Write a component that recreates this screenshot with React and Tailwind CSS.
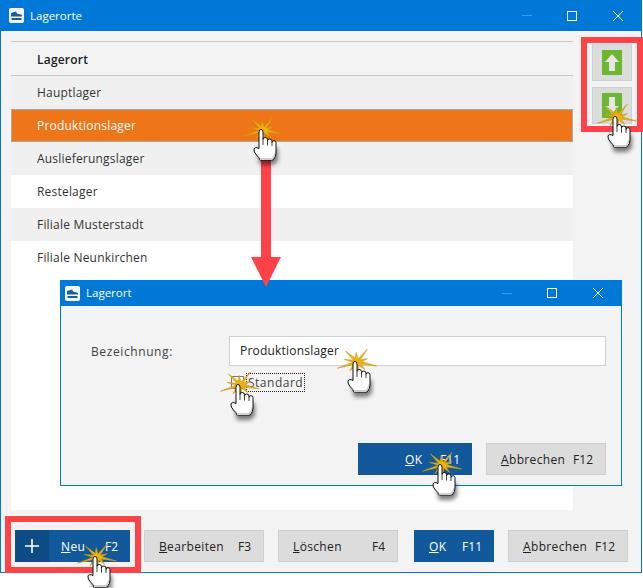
const font = "[font-family:'Open_Sans','Noto_Sans',sans-serif]";

const starPoints = (() => {
  const radii = [20, 5, 12, 4, 18, 4, 13, 5, 21, 4, 13, 4, 18, 5, 12, 4, 19, 4, 11, 5];
  return radii
    .map((r, i) => {
      const a = (i / radii.length) * Math.PI * 2 + 0.25;
      return `${(30 + Math.cos(a) * r).toFixed(1)},${(20 + Math.sin(a) * r * 0.8).toFixed(1)}`;
    })
    .join(' ');
})();

function ClickHand({ className }) {
  return (
    <svg width="60" height="60" viewBox="0 0 60 60" className={`absolute z-30 ${className}`}>
      <defs>
        <filter id="handshadow" x="-30%" y="-30%" width="160%" height="160%">
          <feGaussianBlur stdDeviation="2" />
        </filter>
      </defs>
      <polygon points={starPoints} fill="#edb20f" stroke="#c9960f" strokeWidth="0.6" />
      <path d="M23 38 h22 v13 l-5 4 h-13 z" fill="#000" opacity="0.5" filter="url(#handshadow)" />
      <path
        d="M26 22 q0-2.5 2-2.5 t2 2.5 V29.5 q0-2 2.2-2 t2.3 2 V31 q0-2 2.2-2 t2.3 2 V32.5 q0-1.8 2-1.8 t2 2 V43 q0 4-3 7 H27 q-1-3-3.5-5 q-3-3-2.5-6 q1-2.5 5-.5 z"
        fill="#fff"
        stroke="#111"
        strokeWidth="1"
      />
      <path d="M30 29.5 V35 M34.5 31 V35.5 M39 32.5 V36" stroke="#111" strokeWidth="0.8" fill="none" />
      <path d="M27 48 H39 q2-3 3-7 V45 q-1 3-3 5 H27 z" fill="#cfcfcf" />
    </svg>
  );
}

function AppIcon() {
  return (
    <svg width="15" height="15" viewBox="0 0 15 15" className="shrink-0">
      <rect width="15" height="15" rx="2" fill="#f4f6f8" />
      <path d="M2 5 L7 3.5 L8 5.5 L13 7 V8.5 H2 z" fill="#1a5d9c" />
      <rect x="2.5" y="10" width="10" height="2" fill="#1a5d9c" />
    </svg>
  );
}

function TitleBar({ title, height, iconLeft }) {
  return (
    <div className={`flex items-center bg-[#0078d7] text-white shrink-0 ${height}`}>
      <div className={iconLeft}>
        <AppIcon />
      </div>
      <span className="ml-[6px] text-[11.5px] tracking-normal">{title}</span>
      <div className="ml-auto flex items-center">
        <div className="mr-[35px] h-px w-[10px] bg-[#3f9be3]" />
        <div className="h-[10px] w-[10px] border border-white" />
        <svg width="10" height="10" viewBox="0 0 10 10" className="ml-[36px] mr-[18px]">
          <path d="M0 0 L10 10 M10 0 L0 10" stroke="#fff" strokeWidth="1" />
        </svg>
      </div>
    </div>
  );
}

function Btn({ label, rest, keyName, width, primary, children }) {
  return (
    <button
      className={`flex h-[32px] items-center pr-[12px] text-[12px] tracking-[0.35px] ${width} ${
        primary ? 'bg-[#12599b] text-white' : 'border border-[#cfcfcf] bg-[#dcdcdc] text-[#222]'
      }`}
    >
      {children}
      <span className={`pt-[2px] ${children ? 'ml-[12px]' : ''}`}>
        <u>{label}</u>
        {rest}
      </span>
      <span className="ml-auto pt-[2px] tracking-normal">{keyName}</span>
    </button>
  );
}

function ArrowButton({ down }) {
  return (
    <button className="flex h-[37px] w-[40px] items-start justify-center border border-[#cfcfcf] bg-[#dcdcdc] pt-[5px]">
      <svg width="20" height="25" viewBox="0 0 20 25">
        <rect width="20" height="25" fill="#6cb72f" />
        <path
          d={down ? 'M7 4 H13 V13 H17 L10 21 L3 13 H7 z' : 'M10 4 L17 12 H13 V21 H7 V12 H3 z'}
          fill="#e6e6e6"
        />
      </svg>
    </button>
  );
}

const rows = [
  { name: 'Hauptlager', bg: 'bg-[#f0f0f0] pl-[26px]' },
  { name: 'Produktionslager', bg: 'bg-[#ee7518] text-white border border-[#a9a9a9] pl-[25px]' },
  { name: 'Auslieferungslager', bg: 'bg-[#f0f0f0] pl-[26px]' },
  { name: 'Restelager', bg: 'bg-white pl-[26px]' },
  { name: 'Filiale Musterstadt', bg: 'bg-[#f0f0f0] pl-[26px]' },
  { name: 'Filiale Neunkirchen', bg: 'bg-white pl-[26px]' },
];

export default function App() {
  return (
    <div className={`relative h-[588px] w-[643px] overflow-hidden bg-white text-[12px] tracking-[0.2px] ${font}`}>
      <div className="flex h-[573px] w-[642px] flex-col border border-t-0 border-[#0078d7] bg-[#f3f3f3]">
        <TitleBar title="Lagerorte" height="h-[31px]" iconLeft="ml-[8px]" />

        <div className="flex flex-1 pl-[10px] pt-[10px]">
          <div className="flex w-[562px] flex-col">
            <div className="flex h-[35px] items-center border-y border-[#c8c8c8] pl-[26px] pt-[2px] font-semibold text-[#222]">
              Lagerort
            </div>
            <div className="flex-1 bg-white">
              {rows.map((row) => (
                <div key={row.name} className={`flex h-[33px] items-center text-[#333] ${row.bg}`}>
                  {row.name}
                </div>
              ))}
            </div>
          </div>
          <div className="ml-[19px] flex flex-col gap-[6px] pt-[3px]">
            <ArrowButton />
            <ArrowButton down />
          </div>
        </div>

        <div className="flex items-center pb-[10px] pl-[14px] pt-[20px]">
          <Btn label="N" rest="eu" keyName="F2" width="w-[115px]" primary>
            <span className="flex h-[32px] w-[34px] items-center justify-center bg-[#0e4c86]">
              <svg width="14" height="14" viewBox="0 0 14 14">
                <path d="M7 0 V14 M0 7 H14" stroke="#fff" strokeWidth="1.6" />
              </svg>
            </span>
          </Btn>
          <div className="ml-[14px]">
            <Btn label="B" rest="earbeiten" keyName="F3" width="w-[120px] pl-[14px]" />
          </div>
          <div className="ml-[14px]">
            <Btn label="L" rest="öschen" keyName="F4" width="w-[120px] pl-[14px]" />
          </div>
          <div className="ml-[16px]">
            <Btn label="O" rest="K" keyName="F11" width="w-[80px] pl-[15px]" primary />
          </div>
          <div className="ml-[14px]">
            <Btn label="A" rest="bbrechen" keyName="F12" width="w-[120px] pl-[14px]" />
          </div>
        </div>
      </div>

      {/* Detail dialog on top of the list */}
      <div className="absolute left-[60px] top-[280px] z-10 flex h-[206px] w-[562px] flex-col border border-t-0 border-[#0078d7] bg-[#f3f3f3]">
        <TitleBar title="Lagerort" height="h-[26px]" iconLeft="ml-[4px]" />
        <div className="flex items-center pl-[30px] pt-[30px]">
          <label className="w-[138px] pt-px tracking-[0.6px] text-[#444]">Bezeichnung:</label>
          <div className="flex h-[30px] w-[377px] items-center border border-[#d0d0d0] bg-white pl-[10px] text-[#222]">
            Produktionslager
          </div>
        </div>
        <div className="flex items-center pl-[170px] pt-[7px]">
          <span className="h-[13px] w-[13px] border border-[#777] bg-white" />
          <span className="ml-[2px] flex h-[19px] items-center border border-dotted border-[#222] px-px pt-px tracking-[0.5px] text-[#444]">
            Standard
          </span>
        </div>
        <div className="mt-auto flex justify-end gap-[14px] pb-[10px] pr-[15px]">
          <Btn label="O" rest="K" keyName="F11" width="w-[114px] pl-[47px]" primary />
          <Btn label="A" rest="bbrechen" keyName="F12" width="w-[120px] pl-[14px]" />
        </div>
      </div>

      {/* Annotations */}
      <div className="absolute left-[581px] top-[37px] z-20 h-[95px] w-[62px] border-[6px] border-[#ff4248]" />
      <div className="absolute left-[5px] top-[516px] z-20 h-[57px] w-[136px] border-[6px] border-[#ff4248]" />
      <svg width="30" height="130" viewBox="0 0 30 130" className="absolute left-[251px] top-[157px] z-20">
        <path d="M10 0 H20 V100 H30 L15 130 L0 100 H10 z" fill="#ff4248" />
      </svg>

      <ClickHand className="left-[233px] top-[110px]" />
      <ClickHand className="left-[587px] top-[97px]" />
      <ClickHand className="left-[327px] top-[342px]" />
      <ClickHand className="left-[210px] top-[365px]" />
      <ClickHand className="left-[412px] top-[445px]" />
      <ClickHand className="left-[67px] top-[537px]" />
    </div>
  );
}
